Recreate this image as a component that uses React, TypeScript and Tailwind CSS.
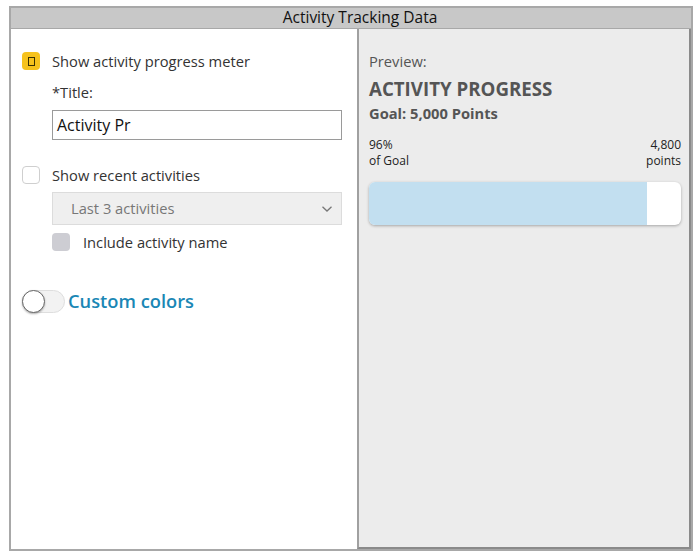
import React from "react";

export default function App() {
  return (
    <div
      className="w-[699px] h-[554px] bg-white pt-[6px] pl-[9px]"
      style={{ fontFamily: '"Open Sans", "Noto Sans", sans-serif' }}
    >
      <div className="w-[684px] h-[545px] border-2 border-[#a8a8a8] flex flex-col bg-white">
        <div className="h-[21px] bg-[#c8c8c8] border-b border-[#a8a8a8] flex items-center justify-center pl-[18px] text-[15.5px] text-[#111]">
          Activity Tracking Data
        </div>
        <div className="flex flex-1 min-h-0">
          <div className="w-[346px] bg-white flex flex-col pl-[11px] pt-[22px]">
            <div className="flex items-center gap-[12px] h-[20px]">
              <div className="w-[18px] h-[18px] rounded-[4px] bg-[#f6c21c] flex items-center justify-center">
                <div className="w-[7px] h-[9px] border-[1.5px] border-[#3a3000]" />
              </div>
              <span className="text-[14.7px] text-[#333]">Show activity progress meter</span>
            </div>
            <div className="ml-[30px] mt-[11px] text-[14.7px] text-[#333] leading-[20px]">*Title:</div>
            <div className="ml-[30px] mt-[8px] w-[290px] h-[30px] border border-[#9a9a9a] flex items-center px-[4px] text-[16px] text-[#111]">
              Activity Pr
            </div>
            <div className="flex items-center gap-[12px] h-[20px] mt-[25px]">
              <div className="w-[18px] h-[18px] rounded-[4px] border border-[#cfcfcf] bg-white" />
              <span className="text-[14.7px] text-[#333]">Show recent activities</span>
            </div>
            <div className="ml-[30px] mt-[7px] w-[290px] h-[33px] bg-[#efefef] border border-[#dcdcdc] flex items-center justify-between pl-[18px] pr-[8px] text-[14.7px] text-[#777]">
              <span>Last 3 activities</span>
              <svg width="12" height="8" viewBox="0 0 12 8" fill="none">
                <path d="M1.5 1.8 L6 6 L10.5 1.8" stroke="#777" strokeWidth="1.3" />
              </svg>
            </div>
            <div className="ml-[30px] mt-[8px] flex items-center gap-[13px] h-[18px]">
              <div className="w-[18px] h-[18px] rounded-[4px] bg-[#cdcdd3]" />
              <span className="text-[14.7px] text-[#333]">Include activity name</span>
            </div>
            <div className="flex items-center mt-[38px] h-[24px]">
              <div className="relative w-[43px] h-[23px] rounded-full bg-[#f2f2f2] border border-[#dedede]">
                <div className="absolute left-[-1px] top-[-1px] w-[23px] h-[23px] rounded-full bg-white border-[1.5px] border-[#666] shadow-[0_1px_2px_rgba(0,0,0,0.3)]" />
              </div>
              <span className="ml-[3px] text-[18.3px] font-semibold text-[#1a87b5]">Custom colors</span>
            </div>
          </div>
          <div className="flex-1 bg-[#ececec] border-l-2 border-[#a0a0a0] border-r-[2px] border-b-[2px] border-r-[#8a8a8a] border-b-[#8a8a8a] pl-[10px] pr-[8px] pt-[22px]">
            <div className="text-[14.7px] text-[#555] leading-[20px]">Preview:</div>
            <div className="text-[18.7px] font-bold text-[#555] mt-[5px] leading-[26px]">ACTIVITY PROGRESS</div>
            <div className="text-[14.7px] font-bold text-[#555] mt-[1px] leading-[20px]">Goal: 5,000 Points</div>
            <div className="flex justify-between text-[12px] text-[#222] leading-[16px] mt-[14px]">
              <div>
                <div>96%</div>
                <div>of Goal</div>
              </div>
              <div className="text-right">
                <div>4,800</div>
                <div>points</div>
              </div>
            </div>
            <div className="mt-[13px] h-[43px] rounded-[6px] bg-white overflow-hidden shadow-[0_1px_3px_rgba(0,0,0,0.3)] flex">
              <div className="w-[278px] h-full bg-[#c2dff0]" />
            </div>
          </div>
        </div>
      </div>
    </div>
  );
}
